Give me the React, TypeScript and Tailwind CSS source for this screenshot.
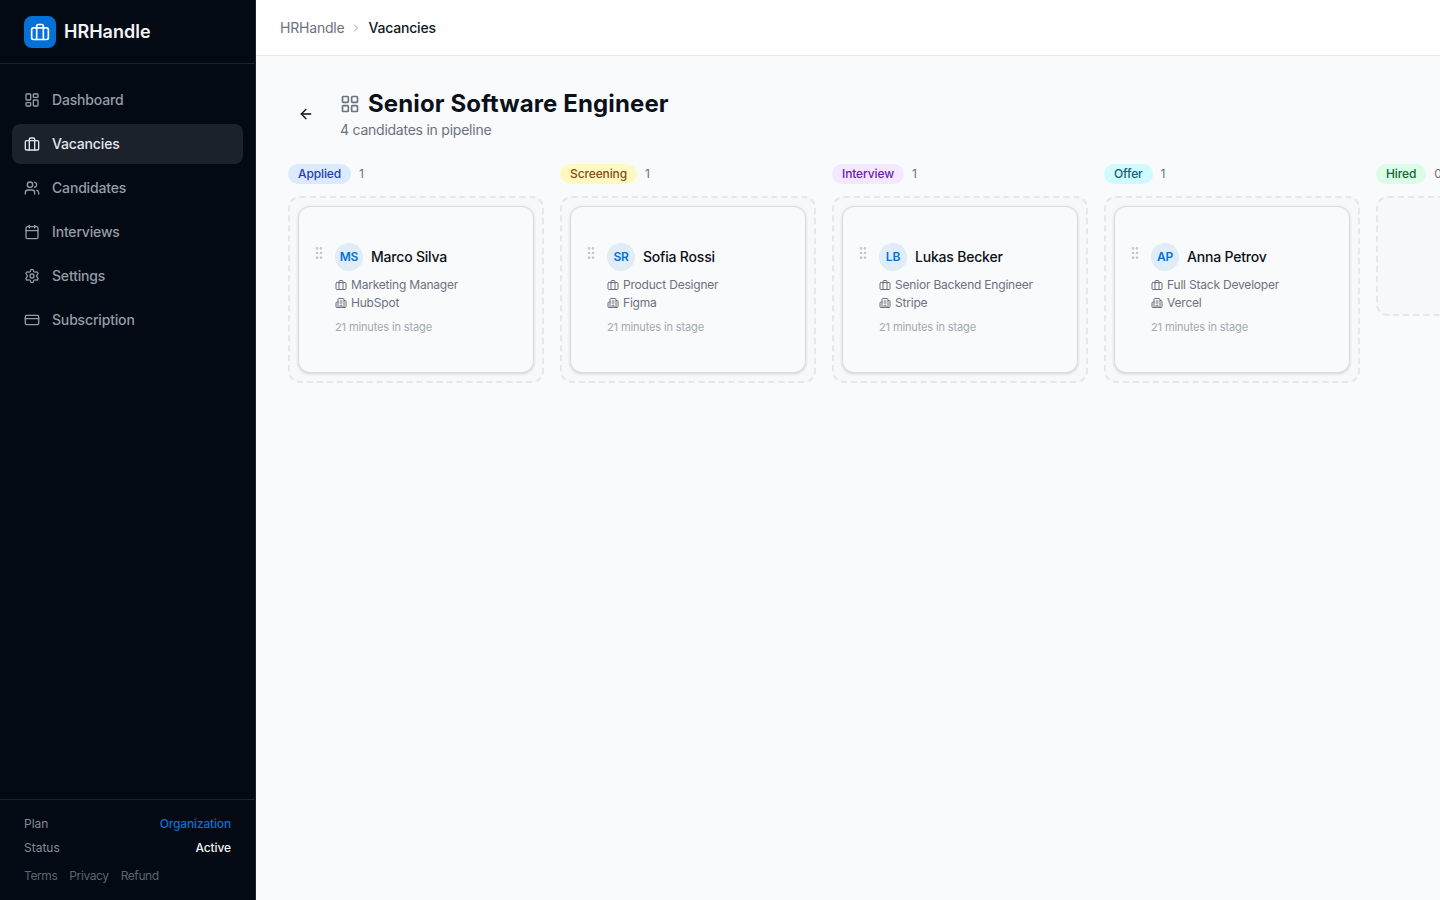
import { ArrowLeft, Building2, Calendar, ChevronRight, CreditCard, GripVertical, LayoutDashboard, LayoutGrid, Settings, Users } from "lucide-react";

const Brief = ({ className = "", sw = 2 }: { className?: string; sw?: number }) => (
  <svg viewBox="0 0 24 24" fill="none" stroke="currentColor" strokeWidth={sw} strokeLinecap="round" strokeLinejoin="round" className={className}>
    <rect width="20" height="14" x="2" y="7" rx="2" />
    <path d="M16 21V5a2 2 0 0 0-2-2h-4a2 2 0 0 0-2 2v16" />
  </svg>
);

const nav = [
  { label: "Dashboard", icon: <LayoutDashboard className="w-4 h-4" /> },
  { label: "Vacancies", icon: <Brief className="w-4 h-4" />, active: true },
  { label: "Candidates", icon: <Users className="w-4 h-4" /> },
  { label: "Interviews", icon: <Calendar className="w-4 h-4" /> },
  { label: "Settings", icon: <Settings className="w-4 h-4" /> },
  { label: "Subscription", icon: <CreditCard className="w-4 h-4" /> },
];

const columns = [
  { stage: "Applied", count: "1", badge: "bg-[#dbeafe] text-[#1e40af]", c: { initials: "MS", name: "Marco Silva", role: "Marketing Manager", company: "HubSpot" } },
  { stage: "Screening", count: "1", badge: "bg-[#fef9c3] text-[#854d0e]", c: { initials: "SR", name: "Sofia Rossi", role: "Product Designer", company: "Figma" } },
  { stage: "Interview", count: "1", badge: "bg-[#f3e8ff] text-[#6b21a8]", c: { initials: "LB", name: "Lukas Becker", role: "Senior Backend Engineer", company: "Stripe" } },
  { stage: "Offer", count: "1", badge: "bg-[#cffafe] text-[#155e75]", c: { initials: "AP", name: "Anna Petrov", role: "Full Stack Developer", company: "Vercel" } },
  { stage: "Hired", count: "0", badge: "bg-[#dcfce7] text-[#166534]" },
];

export default function App() {
  return (
    <div className="flex h-[900px] w-[1440px] overflow-hidden bg-[#f9fafb] font-['Inter',sans-serif]">
      <aside className="flex w-[256px] shrink-0 flex-col bg-[#030a14] border-r border-[#1a222d]">
        <div className="flex h-[64px] items-center gap-2 border-b border-[#1a222d] px-6">
          <div className="flex h-8 w-8 items-center justify-center rounded-lg bg-[#0471d8] text-white">
            <Brief className="h-5 w-5" />
          </div>
          <span className="text-lg font-semibold text-[#f3f4f6]">HRHandle</span>
        </div>
        <nav className="flex flex-1 flex-col gap-1 px-3 pt-4">
          {nav.map((n) => (
            <div
              key={n.label}
              className={`flex h-10 items-center gap-3 rounded-lg px-3 text-sm font-medium tracking-[-0.17px] ${n.active ? "bg-[#1b222c] text-[#e5e7eb]" : "text-[#969ca6]"}`}
            >
              {n.icon}
              {n.label}
            </div>
          ))}
        </nav>
        <div className="border-t border-[#1a222d] px-6 pt-4 pb-4 text-xs">
          <div className="flex h-4 items-center justify-between">
            <span className="text-[#868b94]">Plan</span>
            <span className="font-medium tracking-[-0.17px] text-[#0471d8]">Organization</span>
          </div>
          <div className="mt-2 flex h-4 items-center justify-between">
            <span className="text-[#868b94]">Status</span>
            <span className="font-medium tracking-[-0.1px] text-[#f3f4f6]">Active</span>
          </div>
          <div className="mt-3 flex h-4 items-center gap-3 tracking-[-0.4px] text-[#5f646c]">
            <span>Terms</span>
            <span>Privacy</span>
            <span>Refund</span>
          </div>
        </div>
      </aside>
      <main className="flex min-w-0 flex-1 flex-col">
        <header className="flex h-[56px] shrink-0 items-center gap-1.5 border-b border-[#e5e7eb] bg-white px-6 text-sm tracking-[-0.2px]">
          <span className="text-[#6b7280]">HRHandle</span>
          <ChevronRight className="h-3 w-3 text-[#9ca3af]" />
          <span className="font-medium text-[#111827]">Vacancies</span>
        </header>
        <div className="min-w-0 flex-1 overflow-hidden px-8 pt-8">
          <div className="flex items-center gap-4">
            <div className="flex h-9 w-9 items-center justify-center text-[#0b111a]">
              <ArrowLeft className="h-4 w-4" />
            </div>
            <div>
              <div className="flex items-center gap-2">
                <LayoutGrid className="h-5 w-5 text-[#6b7280]" />
                <h1 className="text-2xl font-bold tracking-[0.12px] text-[#0b111a]">Senior Software Engineer</h1>
              </div>
              <p className="text-sm tracking-[-0.24px] text-[#6b7280]">4 candidates in pipeline</p>
            </div>
          </div>
          <div className="mt-[24px] flex gap-4">
            {columns.map((col) => (
              <div key={col.stage} className="w-[256px] shrink-0">
                <div className="flex h-5 items-center gap-2">
                  <span className={`flex h-5 items-center rounded-full px-2.5 text-xs font-medium tracking-[-0.12px] ${col.badge}`}>{col.stage}</span>
                  <span className="text-xs text-[#6b7280]">{col.count}</span>
                </div>
                <div className={`mt-3 rounded-xl border-2 border-dashed border-[#e5e7eb] bg-[#f3f4f6]/30 p-2 ${col.c ? "" : "h-[120px]"}`}>
                  {col.c && (
                    <div className="flex h-[167px] gap-2 rounded-xl border border-[#d7dbe3] bg-[#f9fafb] px-3 py-4 shadow-[0_1px_3px_rgba(0,0,0,0.15)]">
                      <GripVertical className="mt-[22px] h-4 w-4 shrink-0 text-[#c4c8cf]" />
                      <div className="min-w-0 pt-5">
                        <div className="flex items-center gap-2">
                          <div className="flex h-7 w-7 items-center justify-center rounded-full bg-[#e0ecf7] text-xs font-semibold tracking-[-0.2px] text-[#0471d8]">{col.c.initials}</div>
                          <span className="text-sm font-medium tracking-[-0.2px] text-[#0b111a]">{col.c.name}</span>
                        </div>
                        <div className="mt-[5px] flex h-[18px] items-center gap-1 text-xs tracking-[-0.2px] text-[#6b7280]">
                          <Brief className="h-3 w-3" />
                          {col.c.role}
                        </div>
                        <div className="flex h-[18px] items-center gap-1 text-xs tracking-[-0.2px] text-[#6b7280]">
                          <Building2 className="h-3 w-3" />
                          {col.c.company}
                        </div>
                        <div className="mt-[7px] text-[11px] leading-4 tracking-[-0.13px] text-[#a3a9b3]">21 minutes in stage</div>
                      </div>
                    </div>
                  )}
                </div>
              </div>
            ))}
          </div>
        </div>
      </main>
    </div>
  );
}
